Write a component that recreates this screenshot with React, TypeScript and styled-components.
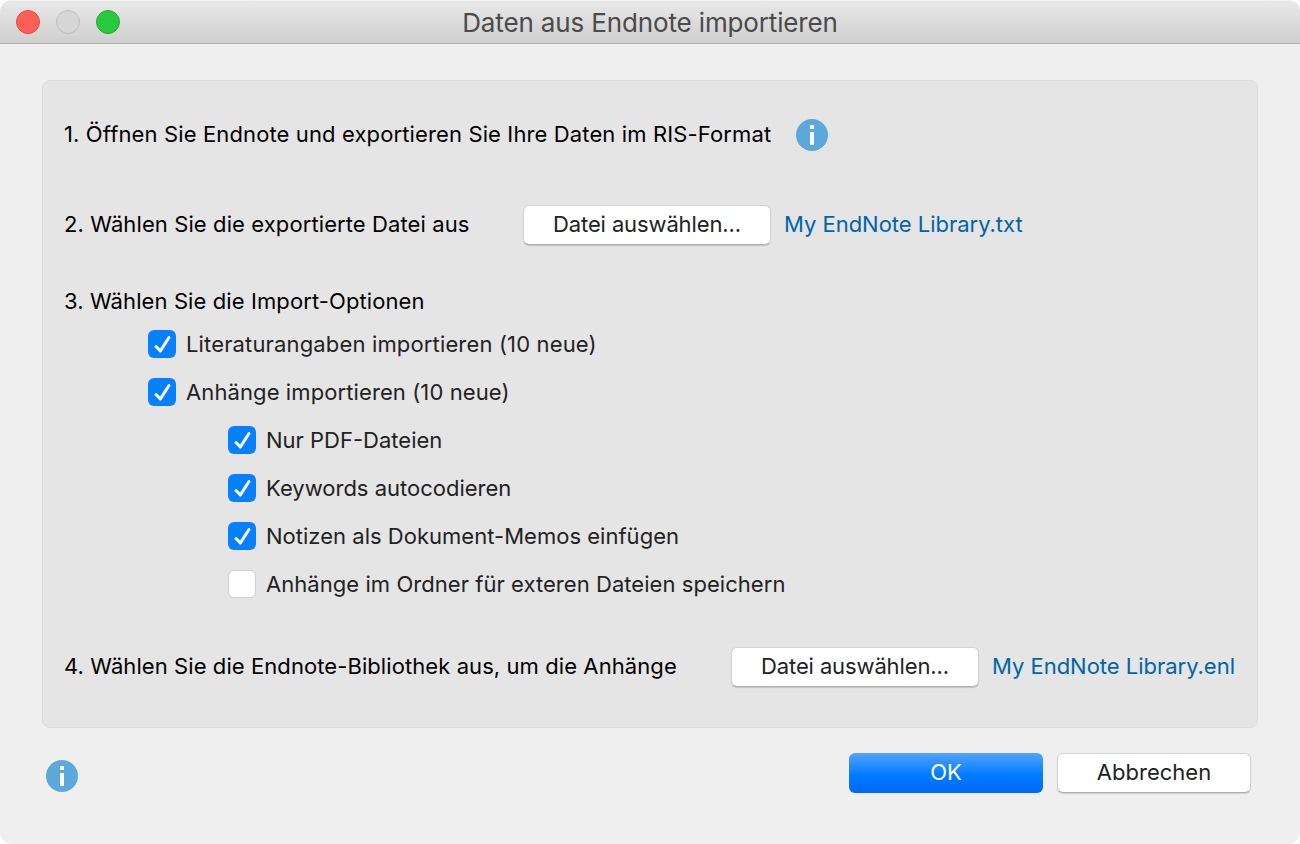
import React from "react";
import styled, { createGlobalStyle } from "styled-components";

const Global = createGlobalStyle`
  html, body { margin: 0; padding: 0; background: #fff; }
  body { font-family: Inter, "Liberation Sans", sans-serif; -webkit-font-smoothing: antialiased; }
`;

const Win = styled.div`
  width: 1300px;
  height: 844px;
  background: #efefef;
  border-radius: 12px;
  overflow: hidden;
  display: flex;
  flex-direction: column;
`;

const TitleBar = styled.div`
  height: 43px;
  flex: none;
  display: grid;
  grid-template-columns: 1fr auto 1fr;
  align-items: center;
  background: linear-gradient(#e9e9e9, #cfcfcf);
  border-bottom: 1px solid #adadad;
  box-shadow: inset 0 1px 0 #f4f4f4;
`;

const Lights = styled.div`
  display: flex;
  gap: 16px;
  padding-left: 16px;
`;

const Light = styled.span<{ $bg: string; $line: string }>`
  width: 24px;
  height: 24px;
  border-radius: 50%;
  box-sizing: border-box;
  background: ${(p) => p.$bg};
  border: 1px solid ${(p) => p.$line};
`;

const Title = styled.div`
  font-size: 26px;
  letter-spacing: -0.14px;
  color: #4a4a4a;
  margin-top: 1px;
`;

const Body = styled.div`
  flex: 1;
  display: flex;
  flex-direction: column;
  padding: 36px 42px 0;
`;

const Panel = styled.div`
  height: 648px;
  box-sizing: border-box;
  background: #e5e5e5;
  border: 1px solid #dcdcdc;
  border-radius: 8px;
  padding: 0 21px;
  display: flex;
  flex-direction: column;
`;

const Row = styled.div<{ $h: number; $top?: number }>`
  height: ${(p) => p.$h}px;
  margin-top: ${(p) => p.$top ?? 0}px;
  display: flex;
  align-items: center;
  flex: none;
`;

const Label = styled.span<{ $w?: number; $track: number; $lift?: number }>`
  font-size: 22px;
  color: #000;
  white-space: nowrap;
  letter-spacing: ${(p) => p.$track}px;
  margin-top: ${(p) => p.$lift ?? -2}px;
  ${(p) => (p.$w ? `width: ${p.$w}px;` : "")}
`;

const InfoWrap = styled.span<{ $ml?: number }>`
  display: inline-flex;
  margin-left: ${(p) => p.$ml ?? 0}px;
`;

const FileButton = styled.button`
  width: 248px;
  height: 40px;
  box-sizing: border-box;
  background: #fff;
  border: 1px solid #d4d4d4;
  border-bottom-color: #b0b0b0;
  border-radius: 6px;
  box-shadow: 0 1px 1px rgba(0, 0, 0, 0.15);
  font: inherit;
  font-size: 22px;
  letter-spacing: -0.12px;
  color: #222;
  padding: 0 0 2px;
`;

const FileLink = styled.a`
  font-size: 22px;
  letter-spacing: -0.02px;
  color: #0064a8;
  margin: -2px 0 0 13px;
  white-space: nowrap;
`;

const CheckRow = styled.label<{ $level: number; $track: number }>`
  height: 48px;
  flex: none;
  display: flex;
  align-items: center;
  gap: 10px;
  padding-left: ${(p) => (p.$level === 1 ? 84 : 164)}px;
  font-size: 22px;
  letter-spacing: ${(p) => p.$track}px;
  color: #222;
  white-space: nowrap;
`;

const Box = styled.span<{ $on: boolean }>`
  width: 28px;
  height: 28px;
  box-sizing: border-box;
  border-radius: 6px;
  display: inline-flex;
  align-items: center;
  justify-content: center;
  background: ${(p) => (p.$on ? "#0780ff" : "#fff")};
  border: ${(p) => (p.$on ? "none" : "1px solid #cfcfcf")};
`;

const Footer = styled.div`
  display: flex;
  align-items: flex-start;
  justify-content: space-between;
  padding: 25px 7px 0 4px;
`;

const FooterInfo = styled.span`
  display: inline-flex;
  margin-top: 7px;
`;

const Actions = styled.div`
  display: flex;
  gap: 14px;
`;

const Primary = styled.button`
  width: 194px;
  height: 40px;
  border: none;
  border-radius: 6px;
  background: linear-gradient(#54a3ff, #007cff 55%, #0068ff);
  color: #fff;
  font: inherit;
  font-size: 22px;
  padding: 0 0 2px;
`;

const Secondary = styled.button`
  width: 194px;
  height: 40px;
  box-sizing: border-box;
  background: #fff;
  border: 1px solid #d4d4d4;
  border-bottom-color: #b0b0b0;
  border-radius: 6px;
  box-shadow: 0 1px 1px rgba(0, 0, 0, 0.15);
  font: inherit;
  font-size: 22px;
  color: #222;
  padding: 0 0 2px;
`;

const Info = () => (
  <svg width="32" height="32" viewBox="0 0 32 32">
    <circle cx="16" cy="16" r="16" fill="#5ca8da" />
    <rect x="14" y="6" width="4" height="4" fill="#fff" />
    <rect x="14" y="13" width="4" height="13" fill="#fff" />
  </svg>
);

const Check = () => (
  <svg width="28" height="28" viewBox="0 0 28 28">
    <path d="M8 16.5 L12.3 21 L21 7.5" fill="none" stroke="#fff" strokeWidth="3" strokeLinecap="round" strokeLinejoin="round" />
  </svg>
);

const Option = ({ level, on, track, children }: { level: number; on: boolean; track: number; children: React.ReactNode }) => (
  <CheckRow $level={level} $track={track}>
    <Box $on={on}>{on && <Check />}</Box>
    <span>{children}</span>
  </CheckRow>
);

export default function App() {
  return (
    <Win>
      <Global />
      <TitleBar>
        <Lights>
          <Light $bg="#ff5f57" $line="#e5483f" />
          <Light $bg="#d6d6d6" $line="#bdbdbd" />
          <Light $bg="#28c93f" $line="#1fae30" />
        </Lights>
        <Title>Daten aus Endnote importieren</Title>
        <span />
      </TitleBar>
      <Body>
        <Panel>
          <Row $h={107}>
            <Label $track={0.125}>1. Öffnen Sie Endnote und exportieren Sie Ihre Daten im RIS-Format</Label>
            <InfoWrap $ml={25}><Info /></InfoWrap>
          </Row>
          <Row $h={74}>
            <Label $w={459} $track={0.1}>2. Wählen Sie die exportierte Datei aus</Label>
            <FileButton>Datei auswählen...</FileButton>
            <FileLink>My EndNote Library.txt</FileLink>
          </Row>
          <Row $h={38} $top={20}>
            <Label $track={0.1} $lift={0}>3. Wählen Sie die Import-Optionen</Label>
          </Row>
          <Option level={1} on track={0.15}>Literaturangaben importieren (10 neue)</Option>
          <Option level={1} on track={0.1}>Anhänge importieren (10 neue)</Option>
          <Option level={2} on track={0}>Nur PDF-Dateien</Option>
          <Option level={2} on track={0}>Keywords autocodieren</Option>
          <Option level={2} on track={0.02}>Notizen als Dokument-Memos einfügen</Option>
          <Option level={2} on={false} track={0.05}>Anhänge im Ordner für exteren Dateien speichern</Option>
          <Row $h={118}>
            <Label $w={667} $track={0.08}>4. Wählen Sie die Endnote-Bibliothek aus, um die Anhänge</Label>
            <FileButton>Datei auswählen...</FileButton>
            <FileLink>My EndNote Library.enl</FileLink>
          </Row>
        </Panel>
        <Footer>
          <FooterInfo><Info /></FooterInfo>
          <Actions>
            <Primary>OK</Primary>
            <Secondary>Abbrechen</Secondary>
          </Actions>
        </Footer>
      </Body>
    </Win>
  );
}
